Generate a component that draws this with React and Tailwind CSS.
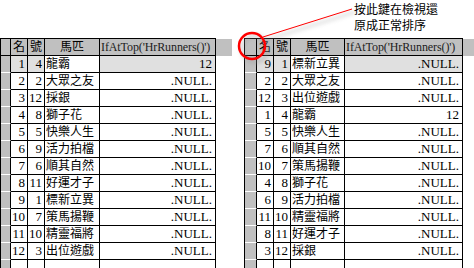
import React from "react";

const leftRows = [
  [1, 4, "龍霸", "12"],
  [2, 2, "大眾之友", ".NULL."],
  [3, 12, "採銀", ".NULL."],
  [4, 8, "獅子花", ".NULL."],
  [5, 5, "快樂人生", ".NULL."],
  [6, 9, "活力拍檔", ".NULL."],
  [7, 6, "順其自然", ".NULL."],
  [8, 11, "好運才子", ".NULL."],
  [9, 1, "標新立異", ".NULL."],
  [10, 7, "策馬揚鞭", ".NULL."],
  [11, 10, "精靈福將", ".NULL."],
  [12, 3, "出位遊戲", ".NULL."],
];

const rightRows = [
  [9, 1, "標新立異", ".NULL."],
  [2, 2, "大眾之友", ".NULL."],
  [12, 3, "出位遊戲", ".NULL."],
  [1, 4, "龍霸", "12"],
  [5, 5, "快樂人生", ".NULL."],
  [7, 6, "順其自然", ".NULL."],
  [10, 7, "策馬揚鞭", ".NULL."],
  [4, 8, "獅子花", ".NULL."],
  [6, 9, "活力拍檔", ".NULL."],
  [11, 10, "精靈福將", ".NULL."],
  [8, 11, "好運才子", ".NULL."],
  [3, 12, "採銀", ".NULL."],
];

const BrowseGrid = ({ rows, widths, tail }) => {
  const [sel, c1, c2, c3, c4] = widths;
  return (
    <div className="flex flex-col">
      {/* header */}
      <div className="flex h-[18px]">
        <div className="flex border-t border-l border-black">
          <div className={`${sel} h-[17px] bg-[#c0c0c0] border-r border-b border-black`}></div>
          <div className={`${c1} h-[17px] bg-[#c0c0c0] border-r border-b border-black text-center`}>名</div>
          <div className={`${c2} h-[17px] bg-[#c0c0c0] border-r border-b border-black text-center`}>號</div>
          <div className={`${c3} h-[17px] bg-[#c0c0c0] border-r border-b border-black text-center`}>馬匹</div>
          <div className={`${c4} h-[17px] bg-[#c0c0c0] border-r border-b border-black pl-[1px] whitespace-nowrap overflow-hidden tracking-[-0.1px] text-[#202020]`}>
            IfAtTop('HrRunners()')
          </div>
        </div>
        <div className={`${tail} h-[17px] mt-[1px] bg-[#c0c0c0]`}></div>
      </div>

      {/* rows */}
      {rows.map((r, i) => {
        const hl = i === 0 ? "bg-[#e0e0e0]" : "bg-white";
        return (
          <div key={i} className="flex border-l border-black h-[17px]">
            <div className={`${sel} bg-[#c0c0c0] border-r border-b border-r-black border-b-white`}></div>
            <div className={`${c1} ${hl} border-r border-b border-black text-right pr-[2px] text-[13px]`}>{r[0]}</div>
            <div className={`${c2} ${hl} border-r border-b border-black text-right pr-[2px] text-[13px]`}>{r[1]}</div>
            <div className={`${c3} bg-white border-r border-b border-black pl-[1px] whitespace-nowrap`}>{r[2]}</div>
            <div className={`${c4} ${hl} border-r border-b border-black text-right pr-[3px] text-[13px]`}>{r[3]}</div>
          </div>
        );
      })}

      {/* empty append row */}
      <div className="flex border-l border-black h-[17px]">
        <div className={`${sel} bg-[#c0c0c0] border-r border-black`}></div>
        <div className={`${c1} border-r border-black`}></div>
        <div className={`${c2} border-r border-black`}></div>
        <div className={`${c3} border-r border-black`}></div>
        <div className={`${c4} border-r border-black`}></div>
      </div>
    </div>
  );
};

export default function App() {
  return (
    <div
      className="relative w-[474px] h-[268px] overflow-hidden bg-white text-black text-[12px] leading-[16px]"
      style={{ fontFamily: "'Liberation Serif', 'Noto Sans CJK TC', serif" }}
    >
      <div className="flex pt-[38px]">
        <BrowseGrid
          rows={leftRows}
          widths={["w-[10px]", "w-[17px]", "w-[17px]", "w-[55px]", "w-[116px]"]}
          tail="w-[16px]"
        />
        <div className="w-[12px] shrink-0"></div>
        <BrowseGrid
          rows={rightRows}
          widths={["w-[12px]", "w-[17px]", "w-[17px]", "w-[54px]", "w-[118px]"]}
          tail="w-[12px]"
        />
      </div>

      {/* annotation callout */}
      <svg className="absolute left-0 top-0" width="474" height="268" viewBox="0 0 474 268">
        <defs>
          <filter id="sh" x="-50%" y="-50%" width="200%" height="200%">
            <feGaussianBlur stdDeviation="2" />
          </filter>
        </defs>
        <g stroke="#9a9a9a" fill="none" opacity="0.6" filter="url(#sh)">
          <circle cx="255" cy="49" r="13" strokeWidth="2.5" />
          <line x1="266" y1="40" x2="355" y2="12" strokeWidth="1.5" />
        </g>
        <circle cx="252" cy="46" r="13" stroke="#ff0000" strokeWidth="2.5" fill="none" />
        <line x1="263" y1="37" x2="352" y2="9" stroke="#ff0000" strokeWidth="1" />
      </svg>
      <div
        className="absolute left-[354px] top-[1px] text-[12px] leading-[16px] text-black"
        style={{ fontFamily: "'Noto Sans CJK TC', sans-serif" }}
      >
        <div>按此鍵在檢視還</div>
        <div>原成正常排序</div>
      </div>
    </div>
  );
}
